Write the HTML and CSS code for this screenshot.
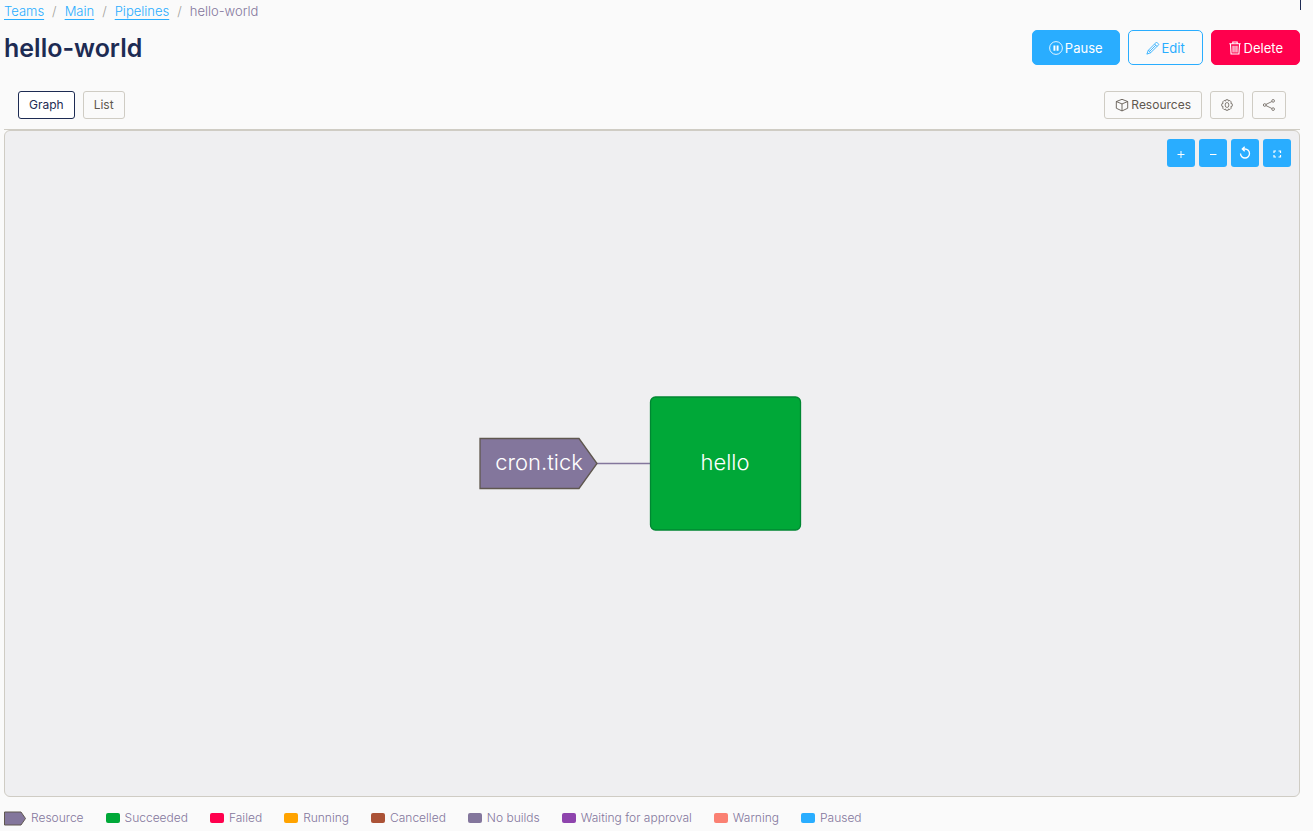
FILE: index.html
```
<!DOCTYPE html>
<html lang="en">
<head>
    <meta charset="UTF-8">
    <meta name="viewport" content="width=device-width, initial-scale=1.0">
    <title>hello-world</title>
    <link rel="stylesheet" href="styles.css">
</head>
<body>
    <div class="rail"></div>

    <nav aria-label="Breadcrumb">
        <ol class="breadcrumb">
            <li><a href="#">Teams</a></li>
            <li><a href="#">Main</a></li>
            <li><a href="#">Pipelines</a></li>
            <li>hello-world</li>
        </ol>
    </nav>

    <header class="page-header">
        <h1>hello-world</h1>
        <div class="actions">
            <button class="button button-primary">
                <svg class="icon" viewBox="0 0 16 16"><circle cx="8" cy="8" r="7.3"/><path d="M6.2 5v6M9.8 5v6" stroke-width="2.2"/></svg>
                Pause
            </button>
            <button class="button button-outline">
                <svg class="icon" viewBox="0 0 16 16"><path d="M12 1.2 14.8 4 5.3 13.4 1 15l1.6-4.3zM9.8 3.4l2.8 2.8M2.6 10.7l1.2.5.5 1.2 1 1M4.3 11.7l6.9-6.9"/></svg>
                Edit
            </button>
            <button class="button button-danger">
                <svg class="icon" viewBox="0 0 16 16"><path d="M1.5 3.2h13M5.5 3V1.2h5V3M2.8 3.4l.7 11.4h9l.7-11.4M5.8 5.5V13M8 5.5V13M10.2 5.5V13" stroke-width="1.3"/></svg>
                Delete
            </button>
        </div>
    </header>

    <div class="toolbar">
        <div class="toolbar-group">
            <button class="tab active">Graph</button>
            <button class="tab">List</button>
        </div>
        <div class="toolbar-group">
            <button class="tab">
                <svg class="icon" viewBox="0 0 16 16"><path d="M8 1.5 14.5 4v7.7L8 14.8l-6.5-3.1V4zM1.5 4 8 6.8 14.5 4M8 6.8v8"/></svg>
                Resources
            </button>
            <button class="tab" aria-label="Settings">
                <svg class="icon icon-small" viewBox="0 0 16 16"><path d="M6.5 1h3l.5 1.8 1.8-.9 2 2.1-.8 1.7 2 .8v3l-2 .8.8 1.8-2 2-1.8-.8-.5 1.7h-3L6 13.3l-1.8.9-2.1-2.1.8-1.8-1.9-.8v-3l1.9-.8L2.1 4l2.1-2.1 1.8.9z"/><ellipse cx="8" cy="8" rx="2.5" ry="3.3"/></svg>
            </button>
            <button class="tab" aria-label="Share">
                <svg class="icon icon-small" viewBox="0 0 16 16"><circle cx="2.3" cy="8" r="1.8"/><circle cx="13.5" cy="2.5" r="1.8"/><circle cx="13.5" cy="13.5" r="1.8"/><path d="m4 7.2 7.8-3.8M4 8.8l7.8 3.8"/></svg>
            </button>
        </div>
    </div>

    <main class="graph">
        <svg class="graph-canvas" viewBox="0 0 1294 665">
            <path class="edge" d="M592 332.5h54"/>
            <path class="node-resource" d="M475 307.5h99l18 25-18 25h-99z"/>
            <rect class="node-job" x="645.5" y="266" width="150" height="133" rx="5"/>
            <text class="node-label" x="534" y="339">cron.tick</text>
            <text class="node-label" x="720" y="339">hello</text>
        </svg>
        <div class="zoom-controls">
            <button aria-label="Zoom in"><svg class="icon" viewBox="0 0 14 14"><path d="M3.5 8.5h7M7 5v7"/></svg></button>
            <button aria-label="Zoom out"><svg class="icon" viewBox="0 0 14 14"><path d="M4 8.5h6.5"/></svg></button>
            <button aria-label="Reset view"><svg class="icon" viewBox="0 0 14 14"><path d="M2.5 7.5A4.5 4.5 0 1 0 7 3H4.6M6.7.8 4.3 3l2.4 2.3" stroke-width="1.3"/></svg></button>
            <button aria-label="Fullscreen"><svg class="icon" viewBox="0 0 14 14"><path d="M4 7V5h2M8.5 5h2v2M10.5 9v2h-2M6 11H4V9" stroke-width="1.2"/></svg></button>
        </div>
    </main>

    <ul class="legend">
        <li><svg class="resource-swatch" viewBox="0 0 22 15"><path d="M.5 1H17l4.5 6.5L17 14H.5z"/></svg>Resource</li>
        <li><span class="swatch succeeded"></span>Succeeded</li>
        <li><span class="swatch failed"></span>Failed</li>
        <li><span class="swatch running"></span>Running</li>
        <li><span class="swatch cancelled"></span>Cancelled</li>
        <li><span class="swatch no-builds"></span>No builds</li>
        <li><span class="swatch waiting"></span>Waiting for approval</li>
        <li><span class="swatch warning"></span>Warning</li>
        <li><span class="swatch paused"></span>Paused</li>
    </ul>
</body>
</html>
```
FILE: styles.css
```
* {
    box-sizing: border-box;
}

body {
    display: flex;
    flex-direction: column;
    min-height: 100vh;
    margin: 0;
    padding: 0 13px 4px 4px;
    background-color: #fafafa;
    color: #83769c;
    font-family: Inter, sans-serif;
    font-size: 12px;
    font-weight: 300;
}

button {
    display: inline-flex;
    align-items: center;
    justify-content: center;
    font-family: inherit;
    font-weight: 400;
    cursor: pointer;
}

/* End of the sidebar line */
.rail {
    position: absolute;
    top: 0;
    right: 12px;
    width: 1px;
    height: 10px;
    background-color: #1d2b53;
}

.icon {
    width: 14px;
    height: 14px;
    fill: none;
    stroke: currentColor;
    stroke-width: 1;
}

.icon-small {
    width: 12px;
    height: 12px;
}

/* Header */
.breadcrumb {
    display: flex;
    margin: 0;
    padding: 0;
    list-style: none;
    font-size: 13px;
    line-height: 22px;
}

.breadcrumb li + li::before {
    content: "/";
    margin: 0 8px;
    color: #a29f99;
}

.breadcrumb a {
    color: #29adff;
    text-underline-offset: 3px;
}

.page-header {
    display: flex;
    align-items: center;
    justify-content: space-between;
    margin-top: 8px;
}

h1 {
    margin: 0;
    padding-top: 2px;
    color: #1d2b53;
    font-size: 25px;
    font-weight: 600;
    line-height: 33px;
}

.actions,
.toolbar-group {
    display: flex;
    gap: 8px;
}

.button {
    gap: 2px;
    min-width: 75px;
    height: 35px;
    padding: 0 16px;
    border: 1px solid #29adff;
    border-radius: 5px;
    font-size: 13px;
}

.button-primary {
    background-color: #29adff;
    color: #fff;
}

.button-outline {
    background-color: transparent;
    color: #29adff;
}

.button-danger {
    border-color: #ff004d;
    background-color: #ff004d;
    color: #fff;
}

/* Toolbar */
.toolbar {
    display: flex;
    justify-content: space-between;
    margin-top: 16px;
    padding: 10px 14px;
    border-bottom: 1px solid #cfccc4;
}

.tab {
    gap: 2px;
    height: 28px;
    padding: 0 10px;
    border: 1px solid #cfccc4;
    border-radius: 3px;
    background-color: transparent;
    color: #5f574f;
    font-size: 12px;
    line-height: 16px;
}

.tab.active {
    border-color: #1d2b53;
    background-color: #fff;
    color: #1d2b53;
}

/* Graph */
.graph {
    position: relative;
    flex: 1;
    display: flex;
    border: 1px solid #cfccc4;
    border-radius: 6px;
    background-color: #efeff1;
}

.graph-canvas {
    width: 100%;
}

.edge {
    stroke: #83769c;
    stroke-width: 1.5;
}

.node-resource {
    fill: #83769c;
    stroke: #5f574f;
    stroke-width: 1.3;
}

.node-job {
    fill: #00a838;
    stroke: #008732;
    stroke-width: 1.3;
}

.node-label {
    fill: #fff;
    font-size: 22px;
    text-anchor: middle;
}

.zoom-controls {
    position: absolute;
    top: 8px;
    right: 8px;
    display: flex;
    gap: 4px;
}

.zoom-controls button {
    width: 28px;
    height: 28px;
    padding: 0;
    border: 0;
    border-radius: 3px;
    background-color: #29adff;
    color: #fff;
}

/* Legend */
.legend {
    display: flex;
    flex-wrap: wrap;
    gap: 4px 22px;
    margin: 12px 0 0;
    padding: 0;
    list-style: none;
    line-height: 18px;
}

.legend li {
    display: flex;
    align-items: center;
    gap: 5px;
}

.resource-swatch {
    width: 22px;
    height: 15px;
    fill: #83769c;
    stroke: #5f574f;
}

.swatch {
    width: 14px;
    height: 10px;
    border-radius: 2px;
}

.succeeded { background-color: #00a838; }
.failed { background-color: #ff004d; }
.running { background-color: #ffa300; }
.cancelled { background-color: #ab5236; }
.no-builds { background-color: #83769c; }
.waiting { background-color: #8e44ad; }
.warning { background-color: #fa8072; }
.paused { background-color: #29adff; }
```
